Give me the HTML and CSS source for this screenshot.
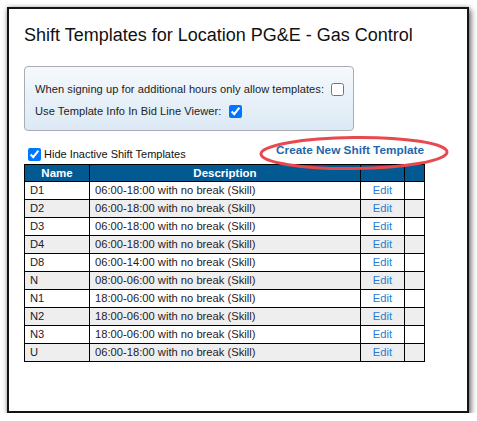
FILE: index.html
```html
<!DOCTYPE html>
<html>
<head>
<meta charset="utf-8">
<link rel="stylesheet" href="styles.css">
</head>
<body>
<div class="frame">
  <h1 class="title">Shift Templates for Location PG&amp;E - Gas Control</h1>
  <div class="settings">
    <label class="setting">When signing up for additional hours only allow templates: <input type="checkbox"></label>
    <label class="setting">Use Template Info In Bid Line Viewer: <input type="checkbox" checked></label>
  </div>
  <div class="toolbar">
    <label class="hide"><input type="checkbox" checked>Hide Inactive Shift Templates</label>
    <a class="create" href="#">Create New Shift Template</a>
    <svg class="ring" width="196" height="40" viewBox="0 0 196 40"><ellipse cx="98" cy="20" rx="93" ry="15.5" fill="none" stroke="#e8494f" stroke-width="3" transform="rotate(-0.6 98 20)"/></svg>
  </div>
  <table class="grid">
    <colgroup><col class="c-name"><col class="c-desc"><col class="c-edit"><col class="c-x"></colgroup>
    <thead><tr><th>Name</th><th>Description</th><th></th><th></th></tr></thead>
    <tbody>
      <tr><td>D1</td><td>06:00-18:00 with no break (Skill)</td><td class="ed"><a href="#">Edit</a></td><td></td></tr>
      <tr><td>D2</td><td>06:00-18:00 with no break (Skill)</td><td class="ed"><a href="#">Edit</a></td><td></td></tr>
      <tr><td>D3</td><td>06:00-18:00 with no break (Skill)</td><td class="ed"><a href="#">Edit</a></td><td></td></tr>
      <tr><td>D4</td><td>06:00-18:00 with no break (Skill)</td><td class="ed"><a href="#">Edit</a></td><td></td></tr>
      <tr><td>D8</td><td>06:00-14:00 with no break (Skill)</td><td class="ed"><a href="#">Edit</a></td><td></td></tr>
      <tr><td>N</td><td>08:00-06:00 with no break (Skill)</td><td class="ed"><a href="#">Edit</a></td><td></td></tr>
      <tr><td>N1</td><td>18:00-06:00 with no break (Skill)</td><td class="ed"><a href="#">Edit</a></td><td></td></tr>
      <tr><td>N2</td><td>18:00-06:00 with no break (Skill)</td><td class="ed"><a href="#">Edit</a></td><td></td></tr>
      <tr><td>N3</td><td>18:00-06:00 with no break (Skill)</td><td class="ed"><a href="#">Edit</a></td><td></td></tr>
      <tr><td>U</td><td>06:00-18:00 with no break (Skill)</td><td class="ed"><a href="#">Edit</a></td><td></td></tr>
    </tbody>
  </table>
</div>
</body>
</html>
```

FILE: styles.css
```css
html, body {
  margin: 0;
  padding: 0;
  background: #ffffff;
}
body {
  font-family: "Liberation Sans", Arial, sans-serif;
  color: #1a1a1a;
}
.frame {
  box-sizing: border-box;
  margin: 7px 0 0 7px;
  width: 462px;
  height: 406px;
  border: 2px solid #141414;
  background: #ffffff;
  padding: 15px 0 0 15px;
  box-shadow: 2px 3px 6px rgba(0,0,0,0.55), 0 0 4px rgba(0,0,0,0.25);
}
.title {
  margin: 0;
  font-size: 18px;
  line-height: 22px;
  font-weight: normal;
  color: #111;
}
.settings {
  box-sizing: border-box;
  margin-top: 20px;
  width: 330px;
  height: 65px;
  border: 1px solid #a8adb3;
  border-radius: 4px;
  background: linear-gradient(#f5f9fc, #dce9f5);
  padding: 11px 0 0 10px;
  display: flex;
  flex-direction: column;
}
.setting {
  display: flex;
  align-items: center;
  height: 22px;
  font-size: 11.1px;
  letter-spacing: 0.05px;
  color: #222;
  white-space: pre;
}
.setting input {
  margin: 0 0 0 4px;
  width: 13px;
  height: 13px;
}
.toolbar {
  position: relative;
  margin-top: 12px;
  width: 400px;
  display: flex;
  justify-content: space-between;
  align-items: flex-end;
}
.hide {
  display: flex;
  align-items: center;
  height: 20px;
  font-size: 11px;
  color: #111;
}
.hide input {
  margin: 0 3px 0 4px;
  width: 13px;
  height: 13px;
}
.create {
  font-size: 11.8px;
  font-weight: bold;
  line-height: 14px;
  margin-bottom: 7px;
  color: #1d68ad;
  text-decoration: none;
}
.ring {
  position: absolute;
  right: -28px;
  top: -10px;
}
.grid {
  width: 400px;
  border-collapse: collapse;
  border: 1px solid #000;
  font-size: 11.2px;
  table-layout: fixed;
}
.c-name { width: 65px; }
.c-desc { width: 271px; }
.c-edit { width: 44px; }
.c-x { width: 20px; }
.grid th {
  background: #035a93;
  color: #fff;
  font-weight: bold;
  font-size: 11.5px;
  height: 16px;
  padding: 0;
  border: 1px solid #000;
  line-height: 16px;
}
.grid td {
  height: 17px;
  padding: 0 0 0 5px;
  border: 1px solid #000;
  line-height: 17px;
  color: #1f1a2a;
  white-space: nowrap;
}
.grid tbody tr:nth-child(even) td {
  background: #eeeeee;
}
.grid td.ed {
  text-align: center;
  padding: 0;
}
.grid td.ed a {
  color: #2a7bd0;
  text-decoration: none;
}
```
